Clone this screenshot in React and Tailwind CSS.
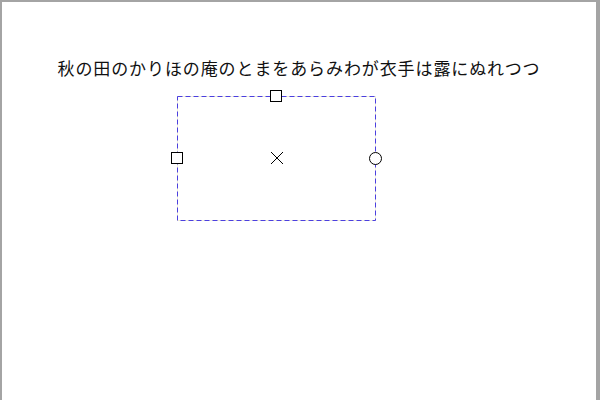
import React from "react";

const POEM = "秋の田のかりほの庵のとまをあらみわが衣手は露にぬれつつ";

// selection frame around a canvas item, with resize / rotate handles
const Selection = () => (
  <div className="relative ml-[175px] mt-[16px] w-[199px] h-[125px]">
    <svg className="absolute inset-0" width="199" height="125">
      <rect x="0.5" y="0.5" width="198" height="124" fill="none" stroke="#f0eed6" strokeWidth="1" />
      <rect
        x="0.5"
        y="0.5"
        width="198"
        height="124"
        fill="none"
        stroke="#4b3fe0"
        strokeWidth="1"
        strokeDasharray="5 3"
      />
    </svg>

    {/* top handle */}
    <div className="absolute left-[93px] top-[-6px] w-[12px] h-[12px] border border-black bg-white" />
    {/* left handle */}
    <div className="absolute left-[-6px] top-[56px] w-[12px] h-[12px] border border-black bg-white" />
    {/* right rotate handle */}
    <div className="absolute left-[192px] top-[56px] w-[13px] h-[13px] border border-black rounded-full bg-white" />
    {/* center */}
    <svg className="absolute left-[93px] top-[55px]" width="14" height="14">
      <path d="M1 1 L13 13 M13 1 L1 13" stroke="#000" strokeWidth="1" fill="none" />
    </svg>
  </div>
);

export default function App() {
  return (
    <div className="w-[600px] h-[400px] bg-white border-t-2 border-l-2 border-r-4 border-[#a4a4a4] overflow-hidden flex flex-col">
      <div
        className="pt-[54px] text-center text-[17px] leading-6 tracking-[0.9px] text-[#111]"
        style={{ fontFamily: '"Noto Sans CJK JP", "Noto Sans", sans-serif' }}
      >
        {POEM}
      </div>
      <Selection />
    </div>
  );
}
